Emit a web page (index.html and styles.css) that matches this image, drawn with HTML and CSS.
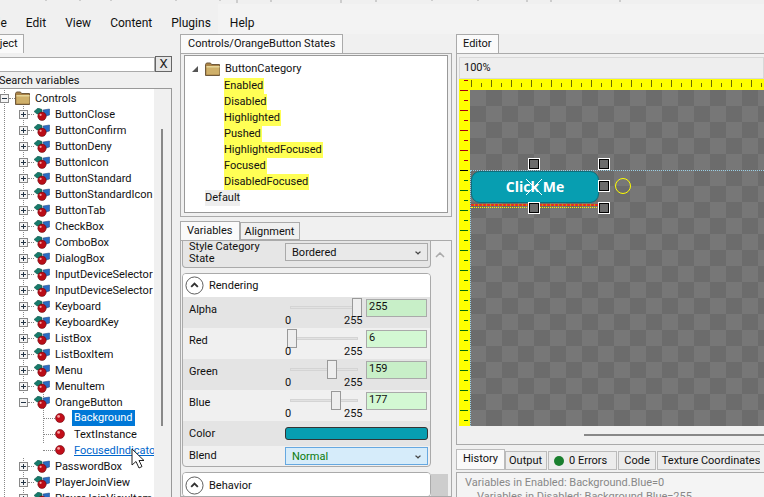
FILE: index.html
```html
<!DOCTYPE html>
<html lang="en">
<head>
  <meta charset="UTF-8" />
  <title>Gum - OrangeButton</title>
  <link rel="stylesheet" href="styles.css">
</head>
<body>
  <svg class="defs" width="0" height="0">
    <symbol id="folder" viewBox="0 0 16 16">
      <path d="M0.5 3.5l1-1.5h4l1 1.5h8v11h-14z" fill="#a98246" stroke="#6f5a3c"/>
      <rect x="1.5" y="5" width="13" height="8.5" fill="#cfb06a"/>
      <rect x="1.5" y="5" width="13" height="1.5" fill="#e6d69a"/>
    </symbol>
    <symbol id="ball" viewBox="0 0 10 10">
      <circle cx="5" cy="5" r="4.5" fill="#c20e1a" stroke="#6e0810" stroke-width=".6"/>
      <circle cx="3.6" cy="3.4" r="1.4" fill="#f7a3a3"/>
    </symbol>
    <symbol id="comp" viewBox="0 0 16 13">
      <path d="M0 3.5l4-3.5 4 1.5v4.5H3z" fill="#167a6a" stroke="#0d4f45" stroke-width=".5"/>
      <path d="M9 2l6.5-1v6l-5 1.5z" fill="#2a6cc4" stroke="#173f78" stroke-width=".5"/>
      <circle cx="8" cy="8.3" r="4.2" fill="#b80d18" stroke="#5c060c" stroke-width=".5"/>
      <circle cx="6.6" cy="6.8" r="1.1" fill="#f7a3a3"/>
    </symbol>
    <symbol id="chev" viewBox="0 0 20 20">
      <circle cx="10" cy="10" r="9" fill="#fff" stroke="#555" stroke-width="1"/>
      <path d="M6.5 11.5L10 8l3.5 3.5" fill="none" stroke="#333" stroke-width="2"/>
    </symbol>
  </svg>

  <svg class="topmarks" width="764" height="4"><path d="M46 0v1M80 0v1M111 0v1M176 0v1M220 0v1M237 0v3M271 0v2M341 0v3M376 0v2M432 0v1M478 0v1M527 0v2M551 0v2M620 0v2" stroke="#aaa"/></svg>
  <nav class="menubar">
    <span class="menu-file">File</span>
    <span>Edit</span>
    <span>View</span>
    <span>Content</span>
    <span>Plugins</span>
    <span>Help</span>
  </nav>

  <div class="columns">
    <!-- Project -->
    <section class="project">
      <div class="tabs"><div class="tab active project-tab">Project</div></div>
      <div class="search-row">
        <input class="search" type="text">
        <button class="clear">X</button>
      </div>
      <div class="search-label">Search variables</div>
      <div class="tree">
        <div class="row root"><i class="box minus"></i><i class="dots"></i><svg class="ic-folder"><use href="#folder"/></svg><span>Controls</span></div>
        <div class="row"><i class="box plus"></i><i class="dots"></i><svg class="ic-comp"><use href="#comp"/></svg><span>ButtonClose</span></div>
        <div class="row"><i class="box plus"></i><i class="dots"></i><svg class="ic-comp"><use href="#comp"/></svg><span>ButtonConfirm</span></div>
        <div class="row"><i class="box plus"></i><i class="dots"></i><svg class="ic-comp"><use href="#comp"/></svg><span>ButtonDeny</span></div>
        <div class="row"><i class="box plus"></i><i class="dots"></i><svg class="ic-comp"><use href="#comp"/></svg><span>ButtonIcon</span></div>
        <div class="row"><i class="box plus"></i><i class="dots"></i><svg class="ic-comp"><use href="#comp"/></svg><span>ButtonStandard</span></div>
        <div class="row"><i class="box plus"></i><i class="dots"></i><svg class="ic-comp"><use href="#comp"/></svg><span>ButtonStandardIcon</span></div>
        <div class="row"><i class="box plus"></i><i class="dots"></i><svg class="ic-comp"><use href="#comp"/></svg><span>ButtonTab</span></div>
        <div class="row"><i class="box plus"></i><i class="dots"></i><svg class="ic-comp"><use href="#comp"/></svg><span>CheckBox</span></div>
        <div class="row"><i class="box plus"></i><i class="dots"></i><svg class="ic-comp"><use href="#comp"/></svg><span>ComboBox</span></div>
        <div class="row"><i class="box plus"></i><i class="dots"></i><svg class="ic-comp"><use href="#comp"/></svg><span>DialogBox</span></div>
        <div class="row"><i class="box plus"></i><i class="dots"></i><svg class="ic-comp"><use href="#comp"/></svg><span>InputDeviceSelector</span></div>
        <div class="row"><i class="box plus"></i><i class="dots"></i><svg class="ic-comp"><use href="#comp"/></svg><span>InputDeviceSelector</span></div>
        <div class="row"><i class="box plus"></i><i class="dots"></i><svg class="ic-comp"><use href="#comp"/></svg><span>Keyboard</span></div>
        <div class="row"><i class="box plus"></i><i class="dots"></i><svg class="ic-comp"><use href="#comp"/></svg><span>KeyboardKey</span></div>
        <div class="row"><i class="box plus"></i><i class="dots"></i><svg class="ic-comp"><use href="#comp"/></svg><span>ListBox</span></div>
        <div class="row"><i class="box plus"></i><i class="dots"></i><svg class="ic-comp"><use href="#comp"/></svg><span>ListBoxItem</span></div>
        <div class="row"><i class="box plus"></i><i class="dots"></i><svg class="ic-comp"><use href="#comp"/></svg><span>Menu</span></div>
        <div class="row"><i class="box plus"></i><i class="dots"></i><svg class="ic-comp"><use href="#comp"/></svg><span>MenuItem</span></div>
        <div class="row orange"><i class="box minus"></i><i class="dots"></i><svg class="ic-comp"><use href="#comp"/></svg><span>OrangeButton</span></div>
        <div class="row child"><i class="elbow"></i><svg class="ic-ball"><use href="#ball"/></svg><span class="selected">Background</span></div>
        <div class="row child"><i class="elbow"></i><svg class="ic-ball"><use href="#ball"/></svg><span>TextInstance</span></div>
        <div class="row child last"><i class="elbow"></i><svg class="ic-ball"><use href="#ball"/></svg><span class="hover-link">FocusedIndicator</span></div>
        <div class="row"><i class="box plus"></i><i class="dots"></i><svg class="ic-comp"><use href="#comp"/></svg><span>PasswordBox</span></div>
        <div class="row"><i class="box plus"></i><i class="dots"></i><svg class="ic-comp"><use href="#comp"/></svg><span>PlayerJoinView</span></div>
        <div class="row"><i class="box plus"></i><i class="dots"></i><svg class="ic-comp"><use href="#comp"/></svg><span>PlayerJoinViewItem</span></div>
        <div class="tree-scroll"><i></i></div>
        <svg class="cursor" width="16" height="22" viewBox="0 0 16 22"><path d="M1 1v16l4-3.5 3 6.5 3-1.5-3-6h5z" fill="#fff" stroke="#222"/></svg>
      </div>
    </section>

    <!-- States and variables -->
    <section class="middle">
      <div class="tabs"><div class="tab active states-tab">Controls/OrangeButton States</div></div>
      <div class="panel states-panel">
        <div class="states">
          <div class="cat"><i class="tri"></i><svg class="ic-folder"><use href="#folder"/></svg><span>ButtonCategory</span></div>
          <div class="state"><span>Enabled</span></div>
          <div class="state"><span>Disabled</span></div>
          <div class="state"><span>Highlighted</span></div>
          <div class="state"><span>Pushed</span></div>
          <div class="state"><span>HighlightedFocused</span></div>
          <div class="state"><span>Focused</span></div>
          <div class="state"><span>DisabledFocused</span></div>
          <div class="default"><span>Default</span></div>
        </div>
      </div>
      <div class="tabs vars-tabs">
        <div class="tab active">Variables</div>
        <div class="tab">Alignment</div>
      </div>
      <div class="panel vars-panel">
        <div class="vars">
          <div class="card style-card">
            <div class="style-labels">Style Category<br>State</div>
            <div class="combo">Bordered<b class="caret"></b></div>
          </div>
          <div class="card">
            <div class="card-head"><svg class="ic-chev"><use href="#chev"/></svg>Rendering</div>
            <div class="var shade">
              <label>Alpha</label>
              <div class="slider"><i class="track"></i><i class="thumb" style="left:67px"></i><span class="min">0</span><span class="max">255</span></div>
              <input class="num" value="255">
            </div>
            <div class="var">
              <label>Red</label>
              <div class="slider"><i class="track"></i><i class="thumb" style="left:2px"></i><span class="min">0</span><span class="max">255</span></div>
              <input class="num" value="6">
            </div>
            <div class="var shade">
              <label>Green</label>
              <div class="slider"><i class="track"></i><i class="thumb" style="left:42px"></i><span class="min">0</span><span class="max">255</span></div>
              <input class="num" value="159">
            </div>
            <div class="var">
              <label>Blue</label>
              <div class="slider"><i class="track"></i><i class="thumb" style="left:46px"></i><span class="min">0</span><span class="max">255</span></div>
              <input class="num" value="177">
            </div>
            <div class="var shade color-row">
              <label>Color</label>
              <div class="swatch"></div>
            </div>
            <div class="var blend-row">
              <label>Blend</label>
              <div class="combo blend">Normal<b class="caret"></b></div>
            </div>
          </div>
          <div class="card behavior">
            <div class="card-head"><svg class="ic-chev"><use href="#chev"/></svg>Behavior</div>
          </div>
        </div>
        <div class="vars-scroll"><svg width="10" height="6" viewBox="0 0 10 6"><path d="M1 5l4-4 4 4" fill="none" stroke="#aaa" stroke-width="1.5"/></svg><i></i></div>
      </div>
    </section>

    <!-- Editor -->
    <section class="editor">
      <div class="tabs"><div class="tab active">Editor</div></div>
      <div class="panel editor-panel">
        <div class="zoom-bar">100%</div>
        <div class="canvas">
          <div class="grid"></div>
          <svg class="ruler-h" width="296" height="11">
            <defs>
              <pattern id="hticks" width="20" height="11" patternUnits="userSpaceOnUse">
                <rect x="1" y="1" width="1" height="7" fill="#6d6d00"/>
                <rect x="11" y="4" width="1" height="4" fill="#6d6d00"/>
              </pattern>
            </defs>
            <rect width="296" height="11" fill="#ffff00"/>
            <rect x="0" width="296" height="11" fill="url(#hticks)"/>
          </svg>
          <svg class="ruler-v" width="11" height="347">
            <rect width="11" height="347" fill="#ffff00"/>
            <g fill="#a4000f">
              <rect x="5" y="1" width="4" height="1"/><rect x="1" y="11" width="8" height="1"/><rect x="5" y="21" width="4" height="1"/><rect x="1" y="31" width="8" height="1"/><rect x="5" y="41" width="4" height="1"/><rect x="1" y="51" width="8" height="1"/><rect x="5" y="61" width="4" height="1"/><rect x="1" y="71" width="8" height="1"/><rect x="5" y="81" width="4" height="1"/>
            </g>
            <rect x="1" y="91" width="8" height="1" fill="#000"/>
            <g fill="#0a6e0a">
              <rect x="5" y="101" width="4" height="1"/><rect x="1" y="111" width="8" height="1"/><rect x="5" y="121" width="4" height="1"/><rect x="1" y="131" width="8" height="1"/><rect x="5" y="141" width="4" height="1"/><rect x="1" y="151" width="8" height="1"/><rect x="5" y="161" width="4" height="1"/><rect x="1" y="171" width="8" height="1"/><rect x="5" y="181" width="4" height="1"/><rect x="1" y="191" width="8" height="1"/><rect x="5" y="201" width="4" height="1"/><rect x="1" y="211" width="8" height="1"/><rect x="5" y="221" width="4" height="1"/><rect x="1" y="231" width="8" height="1"/><rect x="5" y="241" width="4" height="1"/><rect x="1" y="251" width="8" height="1"/><rect x="5" y="261" width="4" height="1"/><rect x="1" y="271" width="8" height="1"/><rect x="5" y="281" width="4" height="1"/><rect x="1" y="291" width="8" height="1"/><rect x="5" y="301" width="4" height="1"/><rect x="1" y="311" width="8" height="1"/><rect x="5" y="321" width="4" height="1"/><rect x="1" y="331" width="8" height="1"/><rect x="5" y="341" width="4" height="1"/>
            </g>
          </svg>
          <i class="guide-h"></i>
          <i class="guide-v"></i>
          <div class="click-me">Click Me</div>
          <svg class="cross" width="18" height="18" viewBox="0 0 18 18"><path d="M0 1l16 16M16 1L0 17" stroke="#fff" stroke-width="1"/></svg>
          <i class="edge-red"></i>
          <i class="edge-yellow"></i>
          <i class="handle h1"></i>
          <i class="handle h2"></i>
          <i class="handle h3"></i>
          <i class="handle h4"></i>
          <i class="handle h5"></i>
          <i class="rotate"></i>
        </div>
        <div class="hscroll"><i></i></div>
      </div>
      <div class="tabs bottom-tabs">
        <div class="tab active">History</div>
        <div class="tab">Output</div>
        <div class="tab"><i class="dot"></i>0 Errors</div>
        <div class="tab">Code</div>
        <div class="tab">Texture Coordinates</div>
      </div>
      <div class="panel history">
        <div>Variables in Enabled: Background.Blue=0</div>
        <div class="indent">Variables in Disabled: Background.Blue=255</div>
      </div>
    </section>
  </div>
</body>
</html>
```

FILE: styles.css
```css
* {
  box-sizing: border-box;
  margin: 0;
  padding: 0;
}

html, body {
  width: 764px;
  height: 497px;
  overflow: hidden;
}

body {
  font-family: Roboto, "Noto Sans", sans-serif;
  font-size: 11px;
  color: #111;
  background-color: #f0f0f0;
  position: relative;
}

i {
  display: block;
  font-style: normal;
}

.defs {
  position: absolute;
}

/* Top */
.topmarks {
  display: block;
}

.menubar {
  height: 30px;
  display: flex;
  align-items: center;
  padding-top: 8px;
  font-size: 12px;
  background: linear-gradient(90deg, #f0f0f0 218px, #f3f3f3 218px);
}

.menubar span {
  margin-right: 19px;
}

.menu-file {
  margin-left: -12px;
}

/* Tabs */
.tabs {
  display: flex;
  height: 19px;
  align-items: flex-end;
}

.tab {
  height: 18px;
  line-height: 17px;
  padding: 0 6px;
  background-color: #f0f0f0;
  border: 1px solid #aaa;
  white-space: nowrap;
}

.tab.active {
  height: 19px;
  background-color: #fafafa;
  border-bottom: 0;
  position: relative;
  z-index: 1;
}

.states-tab {
  padding: 0 7px;
}

.panel {
  border: 1px solid #aaa;
}

/* Columns */
.columns {
  display: grid;
  grid-template-columns: 176px 272px 304px;
  column-gap: 4px;
  height: 463px;
}

.columns section {
  min-width: 0;
}

/* Project */
.project {
  overflow: hidden;
}

.project-tab {
  margin-left: -26px;
  padding-left: 8px;
  width: 50px;
}

.search-row {
  display: flex;
  height: 17px;
  margin-top: 3px;
  padding-right: 4px;
}

.search {
  flex: 1;
  min-width: 0;
  height: 15px;
  margin-top: 1px;
  margin-left: -4px;
  border: 1px solid #aaa;
  background-color: #fff;
}

.clear {
  width: 17px;
  height: 16px;
  font-family: inherit;
  font-size: 13px;
  line-height: 14px;
  background-color: #e6e6e6;
  border: 1px solid #666;
  color: #222;
}

.search-label {
  height: 15px;
  line-height: 15px;
  margin-left: -1px;
}

.tree {
  position: relative;
  height: 410px;
  width: 172px;
  background-color: #fff;
  border: 1px solid #999;
  border-left: 0;
  overflow: hidden;
  padding-top: 1px;
}

.row {
  height: 16px;
  display: flex;
  align-items: center;
  padding-left: 19px;
  white-space: nowrap;
  background-image: linear-gradient(#888 50%, transparent 50%), linear-gradient(#888 50%, transparent 50%);
  background-size: 1px 2px;
  background-repeat: repeat-y;
  background-position: 4px 0, 23px 0;
}

.row.root {
  padding-left: 0;
  background-image: linear-gradient(#888 50%, transparent 50%);
  background-position: 4px 8px;
}

.row.orange {
  background-position: 4px 0, 43px 10px;
}

.row.child {
  padding-left: 43px;
  background-position: 4px 0, 43px 0;
}

.row.last {
  background-size: 1px 2px, 1px 2px;
  background-repeat: repeat-y, no-repeat;
}

.box {
  width: 9px;
  height: 9px;
  flex: none;
  border: 1px solid #888;
  background-color: #f4f4f4;
  position: relative;
}

.box::before {
  content: "";
  position: absolute;
  left: 1px;
  top: 3px;
  width: 5px;
  height: 1px;
  background-color: #234;
}

.plus::after {
  content: "";
  position: absolute;
  left: 3px;
  top: 1px;
  width: 1px;
  height: 5px;
  background-color: #234;
}

.dots {
  width: 6px;
  flex: none;
  border-top: 1px dotted #888;
}

.ic-folder {
  width: 16px;
  height: 16px;
  flex: none;
  margin-right: 4px;
}

.ic-comp {
  width: 16px;
  height: 13px;
  flex: none;
  margin-right: 5px;
}

.elbow {
  width: 12px;
  flex: none;
  border-top: 1px dotted #888;
}

.ic-ball {
  width: 10px;
  height: 10px;
  flex: none;
  margin-right: 9px;
}

.selected {
  background-color: #0078d7;
  color: #fff;
  padding: 0 3px 0 2px;
  margin-left: -2px;
  line-height: 16px;
}

.hover-link {
  color: #0066cc;
  text-decoration: underline;
}

.tree-scroll {
  position: absolute;
  right: 0;
  top: 0;
  bottom: 0;
  width: 17px;
  background-color: #f0f0f0;
}

.tree-scroll i {
  position: absolute;
  left: 7px;
  top: 40px;
  width: 2px;
  height: 297px;
  background-color: #888;
}

.cursor {
  position: absolute;
  left: 131px;
  top: 359px;
}

/* States */
.states-panel {
  height: 164px;
  padding: 1px 3px;
}

.states {
  height: 158px;
  background-color: #fff;
  border: 1px solid #999;
  padding-top: 3px;
}

.cat {
  display: flex;
  align-items: center;
  height: 19px;
  padding: 1px 0 1px 7px;
}

.tri {
  width: 0;
  height: 0;
  border-left: 6px solid transparent;
  border-bottom: 6px solid #555;
  margin-right: 7px;
}

.state,
.default {
  height: 16px;
  line-height: 16px;
}

.state {
  padding-left: 39px;
}

.state span {
  display: inline-block;
  background-color: #ffff55;
  padding: 0 1px 0 0;
}

.default {
  padding-left: 20px;
}

.default span {
  display: inline-block;
  background-color: #eee;
}

.vars-tabs {
  margin-top: 4px;
}

.vars-tabs .tab:not(.active) {
  padding: 0 5px 0 4px;
}

.vars-panel {
  height: 257px;
  display: flex;
  padding: 0 3px 0 1px;
  overflow: hidden;
}

.vars {
  width: 249px;
}

.card {
  border: 1px solid #aaa;
  border-radius: 4px;
  background-color: #f0f0f0;
  margin-bottom: 5px;
  overflow: hidden;
}

.style-card {
  height: 27px;
  border-top: 0;
  border-radius: 0 0 4px 4px;
  background-color: #e6e6e6;
  display: flex;
}

.style-labels {
  line-height: 12px;
  padding-left: 6px;
  width: 102px;
}

.combo {
  width: 143px;
  height: 18px;
  line-height: 18px;
  margin-top: 2px;
  padding-left: 6px;
  border: 1px solid #aaa;
  background-color: #e9e9e9;
  position: relative;
}

.caret {
  position: absolute;
  right: 6px;
  top: 5px;
  width: 6px;
  height: 6px;
  border-right: 2px solid #444;
  border-bottom: 2px solid #444;
  transform: scale(0.7, 0.6) rotate(45deg);
}

.card-head {
  height: 23px;
  background-color: #fff;
  display: flex;
  align-items: center;
  gap: 5px;
  padding: 0 0 1px 2px;
}

.behavior .card-head {
  padding: 1px 0 0 2px;
}

.ic-chev {
  width: 19px;
  height: 19px;
}

.var {
  height: 31px;
  display: flex;
  position: relative;
  padding-left: 6px;
}

.shade {
  background-color: #e4e4e4;
}

.var label {
  width: 96px;
  line-height: 25px;
}

.slider {
  width: 81px;
  position: relative;
}

.track {
  position: absolute;
  left: 5px;
  top: 9px;
  width: 68px;
  height: 3px;
  background-color: #e2e2e2;
  border: 1px solid #d4d4d4;
}

.thumb {
  position: absolute;
  top: 1px;
  width: 10px;
  height: 19px;
  background-color: #eee;
  border: 1px solid #999;
}

.min,
.max {
  position: absolute;
  top: 17px;
  line-height: 14px;
}

.min {
  left: 0;
}

.max {
  left: 59px;
}

.num {
  width: 61px;
  height: 18px;
  margin-top: 2px;
  padding: 0 2px 3px;
  font: inherit;
  border: 1px solid #aaa;
  background-color: #d3f8d3;
  color: #111;
}

.shade .num {
  background-color: #c8efc8;
}

.color-row {
  height: 25px;
  align-items: center;
}

.blend-row {
  height: 20px;
}

.blend-row label {
  line-height: 20px;
}

.swatch {
  width: 143px;
  height: 13px;
  background-color: #079eb1;
  border: 1px solid #333;
  border-radius: 3px;
}

.blend {
  margin-top: 1px;
  background-color: #d6ecfa;
  border-color: #66a8e0;
  color: #0a7a0a;
}

.vars-scroll {
  flex: 1;
  position: relative;
  text-align: center;
  padding-top: 7px;
  background-color: #f0f0f0;
}

.vars-scroll svg {
  display: inline-block;
}

.vars-scroll i {
  position: absolute;
  left: 0;
  right: 0;
  top: 233px;
  height: 30px;
  background-color: #cdcdcd;
}

/* Editor */
.editor-panel {
  height: 392px;
  margin-right: -4px;
  padding: 3px 0 0 2px;
  border-right: 0;
}

.zoom-bar {
  height: 22px;
  line-height: 19px;
  padding-left: 4px;
  background-color: #eee;
  border: 1px solid #d8d8d8;
}

.canvas {
  position: relative;
  height: 347px;
  overflow: hidden;
  background-color: #fff;
}

.grid {
  position: absolute;
  left: 11px;
  top: 11px;
  right: 0;
  bottom: 0;
  background-color: #777;
  background-image:
    linear-gradient(45deg, #6c6c6c 25%, transparent 25%, transparent 75%, #6c6c6c 75%),
    linear-gradient(45deg, #6c6c6c 25%, transparent 25%, transparent 75%, #6c6c6c 75%);
  background-size: 32px 32px;
  background-position: 0 0, 16px 16px;
}

.ruler-h {
  position: absolute;
  left: 11px;
  top: 0;
}

.ruler-v {
  position: absolute;
  left: 0;
  top: 0;
}

.guide-h {
  position: absolute;
  left: 11px;
  right: 0;
  top: 91px;
  border-top: 1px dotted #9ad0e6;
}

.guide-v {
  position: absolute;
  left: 11px;
  top: 91px;
  bottom: 0;
  border-left: 1px dotted #9ad0e6;
}

.click-me {
  position: absolute;
  left: 12px;
  top: 92px;
  width: 128px;
  height: 32px;
  background-color: #079eb1;
  border: 1px solid #0b6f7d;
  border-radius: 9px;
  color: #fff;
  font-family: "Open Sans", sans-serif;
  font-weight: bold;
  font-size: 14px;
  line-height: 30px;
  text-align: center;
}

.cross {
  position: absolute;
  left: 67px;
  top: 99px;
}

.edge-red {
  position: absolute;
  left: 12px;
  top: 125px;
  width: 128px;
  height: 2px;
  background-image: repeating-linear-gradient(90deg, #e83020 0 3px, #c9a000 3px 4px);
}

.edge-yellow {
  position: absolute;
  left: 12px;
  top: 128px;
  width: 128px;
  border-top: 1px dotted #ffff00;
}

.handle {
  position: absolute;
  width: 10px;
  height: 10px;
  background-color: #6c6c6c;
  border: 1px solid #000;
  outline: 1px solid #fff;
}

.h1 { left: 70px; top: 80px; }
.h2 { left: 140px; top: 80px; }
.h3 { left: 140px; top: 102px; }
.h4 { left: 70px; top: 124px; }
.h5 { left: 140px; top: 124px; }

.rotate {
  position: absolute;
  left: 156px;
  top: 99px;
  width: 16px;
  height: 16px;
  border: 1px solid #ffff00;
  border-radius: 50%;
}

.hscroll {
  height: 18px;
  position: relative;
}

.hscroll i {
  position: absolute;
  left: 125px;
  right: 0;
  top: 8px;
  height: 2px;
  background-color: #888;
}

.bottom-tabs {
  margin-top: 4px;
  height: 21px;
  overflow: hidden;
}

.bottom-tabs .tab {
  height: 19px;
  padding: 0 5px;
  margin-right: 1px;
  background-color: #ececec;
  border: 1px solid #bbb;
}

.bottom-tabs .tab.active {
  height: 21px;
  background-color: #fafafa;
  margin-right: 0;
  padding: 0 6px;
}

.bottom-tabs .tab:nth-child(2) {
  padding: 0 4px 0 3px;
}

.bottom-tabs .tab:nth-child(3) {
  display: flex;
  align-items: center;
  gap: 5px;
  padding: 0 9px 0 5px;
}

.bottom-tabs .tab:nth-child(5) {
  padding-left: 4px;
}

.dot {
  width: 10px;
  height: 10px;
  border-radius: 50%;
  background-color: #1a7f2e;
}

.history {
  margin-top: 2px;
  height: 40px;
  margin-right: -4px;
  padding: 3px 0 0 8px;
  background-color: #f4f4f4;
  color: #888;
  white-space: nowrap;
  line-height: 14px;
  border-right: 0;
}

.indent {
  padding-left: 12px;
}
```
